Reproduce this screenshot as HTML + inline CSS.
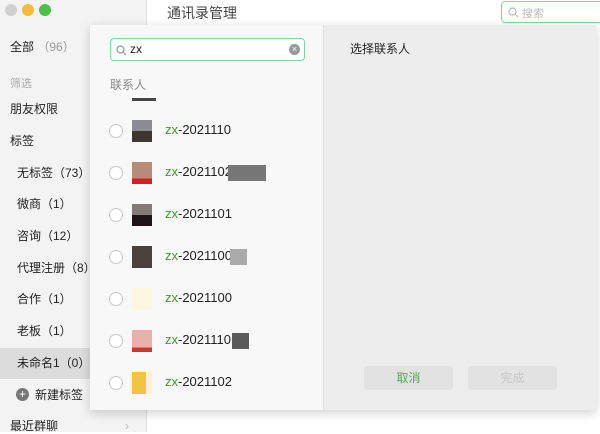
<!DOCTYPE html>
<html><head><meta charset="utf-8"><style>
*{margin:0;padding:0;box-sizing:border-box}
body{width:600px;height:432px;overflow:hidden;position:relative;background:#fff;font-family:"Liberation Sans","Noto Sans CJK SC",sans-serif;color:#222}
.side{position:absolute;left:0;top:0;width:147px;height:432px;background:#f3f3f3;border-right:1px solid #e3e3e3}
.dot{position:absolute;top:4px;width:12px;height:12px;border-radius:50%}
.si{position:absolute;font-size:12px;line-height:16px;white-space:nowrap}
.sel{position:absolute;left:0;top:348px;width:147px;height:31px;background:#dcdcdc}
.top{position:absolute;left:147px;top:0;width:453px;height:25px;background:#fff}
.title{position:absolute;left:167px;top:3px;font-size:14px;color:#444}
.srch{position:absolute;left:501px;top:1px;width:104px;height:22px;border:1px solid #8fd19a;border-radius:4px;font-size:11px;color:#bbb;padding:3px 0 0 20px}
.dlg{position:absolute;left:90px;top:25px;width:506px;height:385px;box-shadow:0 3px 10px rgba(0,0,0,.18)}
.lp{position:absolute;left:0;top:0;width:234px;height:385px;background:#f8f8f8;border-right:1px solid #e0e0e0}
.rp{position:absolute;left:234px;top:0;width:272px;height:385px;background:#ededed}
.inp{position:absolute;left:20px;top:13px;width:195px;height:23px;border:1px solid #8fd19a;border-radius:4px;background:#fff;font-size:12px;padding:3px 0 0 19px}
.row{position:absolute;left:0;width:234px;height:30px}
.rad{position:absolute;left:19px;top:8px;width:14px;height:14px;border:1px solid #c8c8c8;border-radius:50%;background:#fff}
.av{position:absolute;left:42px;top:4px;width:20px;height:22px}
.nm{position:absolute;left:75px;top:6px;font-size:13px;color:#222}
.nm b{font-weight:normal;color:#3a9b3a}
.btn{position:absolute;top:341px;width:89px;height:24px;border-radius:3px;background:#e2e2e2;font-size:12px;text-align:center;line-height:24px}
</style></head><body>
<div class="side">
<div class="dot" style="left:5px;background:#d0d0d0"></div>
<div class="dot" style="left:22px;background:#f4bb3f"></div>
<div class="dot" style="left:39px;background:#4dbf4a"></div>
<div class="sel"></div>
<div class="si" style="left:10px;top:39px">全部 <span style="color:#999">（96）</span></div>
<div class="si" style="left:10px;top:76px;font-size:11px;color:#aaa">筛选</div>
<div class="si" style="left:10px;top:101px">朋友权限</div>
<div class="si" style="left:10px;top:133px">标签</div>
<div class="si" style="left:17px;top:165px">无标签（73）</div>
<div class="si" style="left:17px;top:196px">微商（1）</div>
<div class="si" style="left:17px;top:228px">咨询（12）</div>
<div class="si" style="left:17px;top:260px">代理注册（8）</div>
<div class="si" style="left:17px;top:291px">合作（1）</div>
<div class="si" style="left:17px;top:323px">老板（1）</div>
<div class="si" style="left:17px;top:355px">未命名1（0）</div>
<div style="position:absolute;left:16px;top:388px;width:13px;height:13px;border-radius:50%;background:#777;color:#fff;font-size:12px;line-height:12px;text-align:center">+</div>
<div class="si" style="left:35px;top:387px">新建标签</div>
<div class="si" style="left:10px;top:418px">最近群聊</div>
<div class="si" style="left:125px;top:418px;color:#bbb">›</div>
</div>
<div class="top"></div>
<div class="title">通讯录管理</div>
<div class="srch">搜索<svg style="position:absolute;left:6px;top:5px" width="11" height="11"><circle cx="4.5" cy="4.5" r="3.5" fill="none" stroke="#bbb" stroke-width="1.2"/><path d="M7 7l3 3" stroke="#bbb" stroke-width="1.2"/></svg></div>
<div class="dlg">
<div class="lp">
<div class="inp">zx<svg style="position:absolute;left:5px;top:6px" width="11" height="11"><circle cx="4.5" cy="4.5" r="3.5" fill="none" stroke="#999" stroke-width="1.2"/><path d="M7 7l3 3" stroke="#999" stroke-width="1.2"/></svg><span style="position:absolute;right:4px;top:5px;width:11px;height:11px;border-radius:50%;background:#999;color:#fff;font-size:9px;line-height:11px;text-align:center">×</span></div>
<div style="position:absolute;left:20px;top:51px;font-size:12px;color:#888">联系人</div>
<div style="position:absolute;left:42px;top:73px;width:24px;height:3px;background:#444"></div>
<div class="row" style="top:91px"><div class="rad"></div><div class="av" style="background:linear-gradient(#8c8c96 50%,#3e3530 50%)"></div><div class="nm"><b>zx</b>-2021110</div></div>
<div class="row" style="top:133px"><div class="av" style="background:linear-gradient(#b88a78 75%,#d02020 75%)"></div><div class="rad"></div><div class="nm"><b>zx</b>-2021102</div><div style="position:absolute;left:138px;top:7px;width:38px;height:16px;background:#777"></div></div>
<div class="row" style="top:175px"><div class="rad"></div><div class="av" style="background:linear-gradient(#847a78 50%,#1e1418 50%)"></div><div class="nm"><b>zx</b>-2021101</div></div>
<div class="row" style="top:217px"><div class="rad"></div><div class="av" style="background:#4a413c"></div><div class="nm"><b>zx</b>-2021100</div><div style="position:absolute;left:140px;top:7px;width:17px;height:16px;background:#aaa"></div></div>
<div class="row" style="top:259px"><div class="rad"></div><div class="av" style="background:#fdf6e0"></div><div class="nm"><b>zx</b>-2021100</div></div>
<div class="row" style="top:301px"><div class="rad"></div><div class="av" style="background:linear-gradient(#e8b0a8 80%,#c83a30 80%)"></div><div class="nm"><b>zx</b>-2021110</div><div style="position:absolute;left:142px;top:7px;width:17px;height:16px;background:#5a5a5a"></div></div>
<div class="row" style="top:343px"><div class="rad"></div><div class="av" style="background:linear-gradient(90deg,#f2c545 70%,#fdf2c8 70%)"></div><div class="nm"><b>zx</b>-2021102</div></div>
</div>
<div class="rp">
<div style="position:absolute;left:26px;top:15px;font-size:12px;color:#222">选择联系人</div>
<div class="btn" style="left:40px;color:#4caf50">取消</div>
<div class="btn" style="left:144px;color:#c8c8c8">完成</div>
</div>
</div>
</body></html>
